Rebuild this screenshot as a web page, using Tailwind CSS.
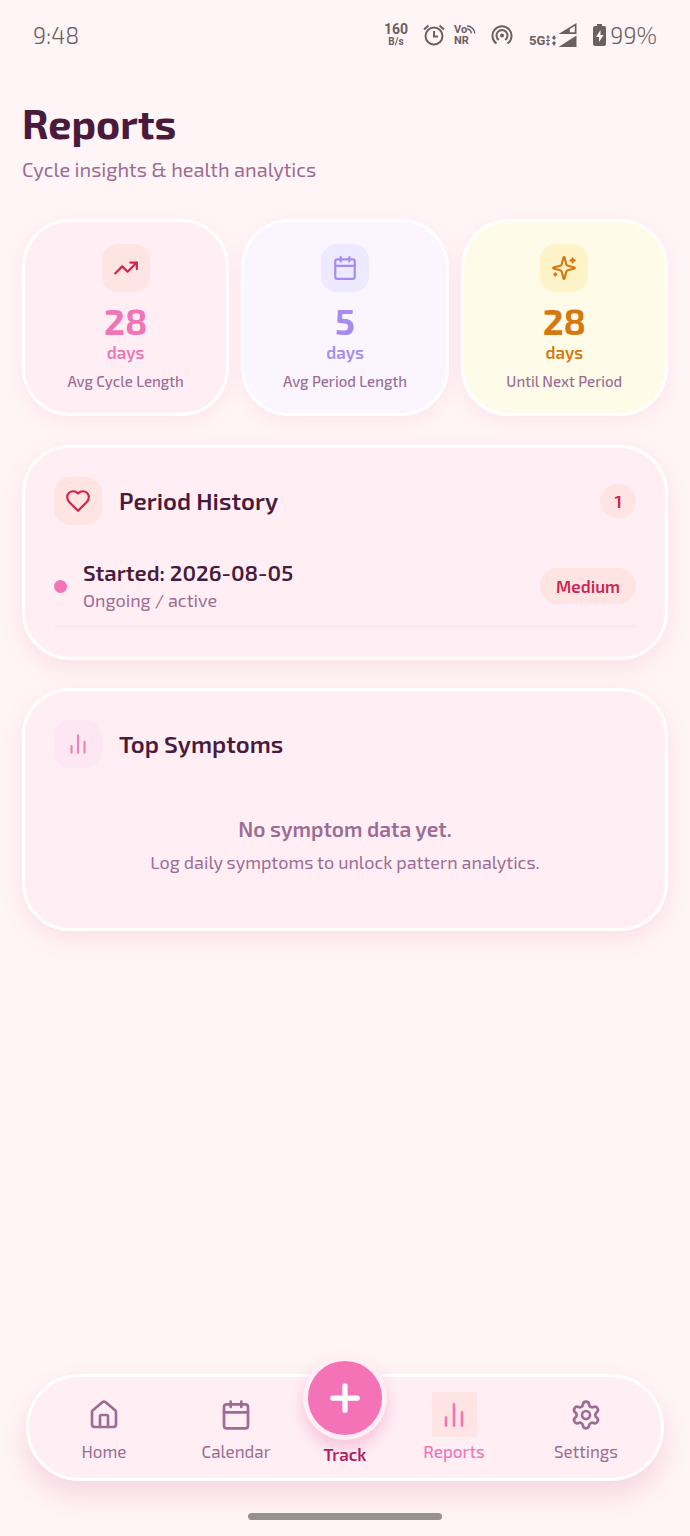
<!DOCTYPE html>
<html lang="en">
<head>
    <meta charset="UTF-8">
    <meta name="viewport" content="width=device-width, initial-scale=1.0">
    <title>Reports</title>
    <script src="https://cdn.jsdelivr.net/npm/@tailwindcss/browser@4"></script>
</head>
<body class="min-h-screen flex flex-col bg-[#fff5f6] text-[#4a1a3c] font-['Exo_2',Roboto,sans-serif]">

    <!-- Status bar -->
    <div class="h-[70px] px-[33px] flex items-center justify-between text-[#6b5f62]">
        <span class="text-[23px] leading-7 font-light">9:48</span>
        <div class="flex items-center">
            <div class="w-6 flex flex-col items-center font-bold font-[Roboto,sans-serif]">
                <span class="text-[14px] leading-[14px]">160</span>
                <span class="text-[10px] leading-3">B/s</span>
            </div>
            <svg class="ml-[14px] size-6" viewBox="0 0 24 24" fill="none" stroke="currentColor" stroke-width="2">
                <circle cx="12" cy="13" r="8.5"/>
                <path d="M12 8v5.500h4M2 6.500l4.500-4M22 6.500l-4.500-4"/>
            </svg>
            <div class="ml-2 w-[22px] flex flex-col font-bold font-[Roboto,sans-serif]">
                <span class="flex items-center text-[11px] leading-[11px]">Vo
                    <svg class="size-[9px]" viewBox="0 0 9 9" fill="none" stroke="currentColor" stroke-width="1.4"><path d="M0 1a8 8 0 0 1 8 7.500M0 4a5 5 0 0 1 4.500 4.500"/></svg>
                </span>
                <span class="text-[11px] leading-[11px]">NR</span>
            </div>
            <svg class="ml-[14px] size-6" viewBox="0 0 24 24" fill="none" stroke="currentColor" stroke-width="2">
                <path d="M6.500 20.500a9.500 9.500 0 1 1 11 0"/>
                <path d="M8.800 17a5.500 5.500 0 1 1 6.400 0"/>
                <circle cx="12" cy="12.500" r="2" fill="currentColor" stroke="none"/>
            </svg>
            <div class="ml-[15px] flex items-end">
                <span class="text-[13px] leading-3 font-bold font-[Roboto,sans-serif]">5G</span>
                <svg class="w-3 h-3" viewBox="0 0 12 12" fill="currentColor">
                    <path d="M3 0l2 2.500h-4zM3 11l2-2.500h-4zM9 0l2 3-2 2-2-2zM9 11l2-3-2-2-2 2z"/>
                    <path d="M2.500 2h1v7h-1zM1 5h4v1H1z"/>
                </svg>
                <svg class="ml-px w-[19px] h-6" viewBox="0 0 19 24" fill="currentColor">
                    <path d="M18.500 0v11H0.500zM16.800 3l-5 3v3.300h5z" fill-rule="evenodd"/>
                    <path d="M18.500 12.500V24H0.500z"/>
                </svg>
            </div>
            <svg class="ml-4 w-[13px] h-[22px]" viewBox="0 0 13 22">
                <path d="M4 0h5v2h2a2 2 0 0 1 2 2v16a2 2 0 0 1-2 2H2a2 2 0 0 1-2-2V4a2 2 0 0 1 2-2h2z" fill="currentColor"/>
                <path d="M7.500 6L3 13h3v5l4.500-7h-3z" fill="#fff5f6"/>
            </svg>
            <span class="ml-1 text-[23px] leading-7 font-light">99%</span>
        </div>
    </div>

    <main class="px-[22px] pt-[27px]">
        <h1 class="text-[41px] leading-[52px] font-bold">Reports</h1>
        <p class="mt-[6px] text-[20px] leading-7 text-[#9d6b93]">Cycle insights &amp; health analytics</p>

        <!-- Stats -->
        <section class="mt-9 grid grid-cols-3 gap-3 text-center">
            <div class="rounded-[48px] border-3 border-white bg-[#ffeff5] pt-[22px] pb-[21px] flex flex-col items-center text-[#f075b4] shadow-[0_6px_20px_rgba(244,114,182,0.12)]">
                <div class="size-12 rounded-2xl bg-[#ffe4e4] text-[#d4214d] flex items-center justify-center">
                    <svg class="size-[26px]" viewBox="0 0 24 24" fill="none" stroke="currentColor" stroke-width="2" stroke-linecap="round" stroke-linejoin="round"><path d="M22 7l-8.500 8.500-5-5L2 17"/><path d="M16 7h6v6"/></svg>
                </div>
                <span class="mt-2 text-[36px] leading-[42px] font-bold">28</span>
                <span class="text-[17px] leading-5 font-semibold">days</span>
                <span class="mt-2 text-[15px] leading-[22px] font-medium text-[#9d6b93]">Avg Cycle Length</span>
            </div>
            <div class="rounded-[48px] border-3 border-white bg-[#faf5ff] pt-[22px] pb-[21px] flex flex-col items-center text-[#a78bee] shadow-[0_6px_20px_rgba(244,114,182,0.12)]">
                <div class="size-12 rounded-2xl bg-[#ede9fe] flex items-center justify-center">
                    <svg class="size-[26px]" viewBox="0 0 24 24" fill="none" stroke="currentColor" stroke-width="2" stroke-linecap="round" stroke-linejoin="round"><path d="M8 2v4M16 2v4M3 10h18"/><rect x="3" y="4" width="18" height="18" rx="2"/></svg>
                </div>
                <span class="mt-2 text-[36px] leading-[42px] font-bold">5</span>
                <span class="text-[17px] leading-5 font-semibold">days</span>
                <span class="mt-2 text-[15px] leading-[22px] font-medium text-[#9d6b93]">Avg Period Length</span>
            </div>
            <div class="rounded-[48px] border-3 border-white bg-[#fefce8] pt-[22px] pb-[21px] flex flex-col items-center text-[#d4780f] shadow-[0_6px_20px_rgba(244,114,182,0.12)]">
                <div class="size-12 rounded-2xl bg-[#fdf2c8] flex items-center justify-center">
                    <svg class="size-[26px]" viewBox="0 0 24 24" fill="none" stroke="currentColor" stroke-width="2" stroke-linecap="round" stroke-linejoin="round"><path d="M9.937 15.500A2 2 0 0 0 8.500 14.063l-6.135-1.582a.5.5 0 0 1 0-.962L8.500 9.936A2 2 0 0 0 9.937 8.500l1.582-6.135a.5.5 0 0 1 .963 0L14.063 8.500A2 2 0 0 0 15.500 9.937l6.135 1.581a.5.5 0 0 1 0 .964L15.500 14.063a2 2 0 0 0-1.437 1.437l-1.582 6.135a.5.5 0 0 1-.963 0z"/><path d="M20 3v4M22 5h-4M4 17v2M5 18H3"/></svg>
                </div>
                <span class="mt-2 text-[36px] leading-[42px] font-bold">28</span>
                <span class="text-[17px] leading-5 font-semibold">days</span>
                <span class="mt-2 text-[15px] leading-[22px] font-medium text-[#9d6b93]">Until Next Period</span>
            </div>
        </section>

        <!-- Period history -->
        <section class="mt-[29px] rounded-[48px] border-3 border-white bg-[#ffeff5] p-[29px] shadow-[0_8px_24px_rgba(219,39,119,0.1)]">
            <div class="flex items-center">
                <div class="size-12 rounded-2xl bg-[#ffe4e4] text-[#d4214d] flex items-center justify-center">
                    <svg class="size-[26px]" viewBox="0 0 24 24" fill="none" stroke="currentColor" stroke-width="2" stroke-linecap="round" stroke-linejoin="round"><path d="M19 14c1.490-1.460 3-3.210 3-5.500A5.500 5.500 0 0 0 16.500 3c-1.760 0-3 .5-4.500 2-1.500-1.500-2.740-2-4.500-2A5.500 5.500 0 0 0 2 8.500c0 2.300 1.500 4.050 3 5.500l7 7Z"/></svg>
                </div>
                <h2 class="ml-[17px] text-[24px] leading-8 font-semibold">Period History</h2>
                <span class="ml-auto rounded-full bg-[#ffe4e4] px-[14px] py-[5px] text-[18px] leading-6 font-semibold text-[#cc2450]">1</span>
            </div>
            <ul class="mt-[21px]">
                <li class="flex items-center border-b-3 border-[#fce7f3] pt-3 pb-[11px]">
                    <span class="size-[13px] rounded-full bg-[#f472b6]"></span>
                    <div class="ml-4">
                        <p class="text-[22px] leading-7 font-semibold">Started: 2026-08-05</p>
                        <p class="text-[18px] leading-7 text-[#9d6b93]">Ongoing / active</p>
                    </div>
                    <span class="ml-auto rounded-full bg-[#ffe4e4] px-4 py-[6px] text-[17px] leading-6 font-semibold text-[#cc2450]">Medium</span>
                </li>
            </ul>
        </section>

        <!-- Top symptoms -->
        <section class="mt-7 rounded-[48px] border-3 border-white bg-[#ffeff5] p-[29px] shadow-[0_8px_24px_rgba(219,39,119,0.1)]">
            <div class="flex items-center">
                <div class="size-12 rounded-2xl bg-[#fce7f3] text-[#ee82bb] flex items-center justify-center">
                    <svg class="size-[26px]" viewBox="0 0 24 24" fill="none" stroke="currentColor" stroke-width="2" stroke-linecap="round"><path d="M18 20V10M12 20V4M6 20v-6"/></svg>
                </div>
                <h2 class="ml-[17px] text-[24px] leading-8 font-semibold">Top Symptoms</h2>
            </div>
            <div class="pt-[47px] pb-[25px] text-center text-[#9d6b93]">
                <p class="text-[21px] leading-7 font-semibold">No symptom data yet.</p>
                <p class="mt-[7px] text-[18px] leading-6">Log daily symptoms to unlock pattern analytics.</p>
            </div>
        </section>
    </main>

    <!-- Bottom navigation -->
    <nav class="mt-auto mx-[26px] mb-8 rounded-full border-3 border-white bg-[#ffeff5] px-[9px] pt-[15px] pb-[13px] flex items-start text-[17px] leading-[22px] text-[#9d6b93] shadow-[0_14px_28px_rgba(190,24,93,0.14)]">
        <a href="#" class="flex-1 flex flex-col items-center gap-[3px]">
            <span class="size-[45px] flex items-center justify-center">
                <svg class="size-8" viewBox="0 0 24 24" fill="none" stroke="currentColor" stroke-width="2" stroke-linecap="round" stroke-linejoin="round"><path d="M15 21v-8a1 1 0 0 0-1-1h-4a1 1 0 0 0-1 1v8"/><path d="M3 10a2 2 0 0 1 .709-1.528l7-6a2 2 0 0 1 2.582 0l7 6A2 2 0 0 1 21 10v9a2 2 0 0 1-2 2H5a2 2 0 0 1-2-2z"/></svg>
            </span>
            Home
        </a>
        <a href="#" class="flex-1 flex flex-col items-center gap-[3px]">
            <span class="size-[45px] flex items-center justify-center">
                <svg class="size-8" viewBox="0 0 24 24" fill="none" stroke="currentColor" stroke-width="2" stroke-linecap="round" stroke-linejoin="round"><path d="M8 2v4M16 2v4M3 10h18"/><rect x="3" y="4" width="18" height="18" rx="2"/></svg>
            </span>
            Calendar
        </a>
        <button type="button" class="-mt-9 w-[86px] flex flex-col items-center gap-[3px] font-semibold text-[#b01c60]">
            <span class="size-[84px] rounded-full border-5 border-[#ffeff5] bg-[#f472b6] text-white flex items-center justify-center shadow-[0_8px_16px_rgba(219,39,119,0.22)]">
                <svg class="size-[42px]" viewBox="0 0 24 24" fill="none" stroke="currentColor" stroke-width="3" stroke-linecap="round"><path d="M5 12h14M12 5v14"/></svg>
            </span>
            Track
        </button>
        <a href="#" aria-current="page" class="flex-1 flex flex-col items-center gap-[3px] font-medium text-[#ee78b6]">
            <span class="size-[45px] bg-[#ffe4e4] flex items-center justify-center">
                <svg class="size-8" viewBox="0 0 24 24" fill="none" stroke="currentColor" stroke-width="2" stroke-linecap="round"><path d="M18 20V10M12 20V4M6 20v-6"/></svg>
            </span>
            Reports
        </a>
        <a href="#" class="flex-1 flex flex-col items-center gap-[3px]">
            <span class="size-[45px] flex items-center justify-center">
                <svg class="size-8" viewBox="0 0 24 24" fill="none" stroke="currentColor" stroke-width="2" stroke-linecap="round" stroke-linejoin="round"><path d="M9.671 4.136a2.340 2.340 0 0 1 4.659 0 2.340 2.340 0 0 0 3.319 1.915 2.340 2.340 0 0 1 2.330 4.033 2.340 2.340 0 0 0 0 3.831 2.340 2.340 0 0 1-2.330 4.033 2.340 2.340 0 0 0-3.319 1.915 2.340 2.340 0 0 1-4.659 0 2.340 2.340 0 0 0-3.320-1.915 2.340 2.340 0 0 1-2.330-4.033 2.340 2.340 0 0 0 0-3.831A2.340 2.340 0 0 1 6.350 6.051a2.340 2.340 0 0 0 3.319-1.915"/><circle cx="12" cy="12" r="3"/></svg>
            </span>
            Settings
        </a>
    </nav>
    <div class="mb-4 mx-auto w-[194px] h-[7px] rounded-full bg-[#969090]"></div>
</body>
</html>
